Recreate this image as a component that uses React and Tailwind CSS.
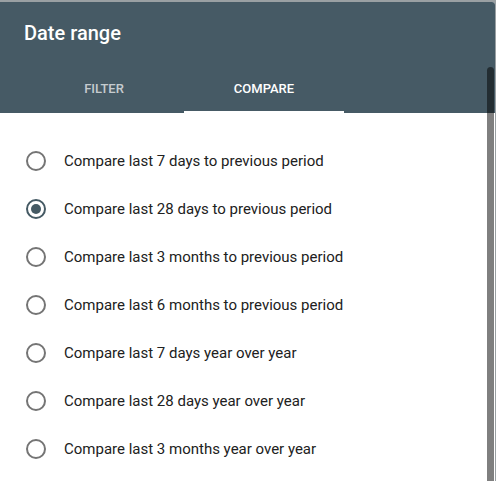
import React, { useState } from 'react';

const options = [
  'Compare last 7 days to previous period',
  'Compare last 28 days to previous period',
  'Compare last 3 months to previous period',
  'Compare last 6 months to previous period',
  'Compare last 7 days year over year',
  'Compare last 28 days year over year',
  'Compare last 3 months year over year',
];

function Radio({ checked }) {
  return (
    <span
      className={`flex h-5 w-5 shrink-0 items-center justify-center rounded-full border-2 ${
        checked ? 'border-[#455a64]' : 'border-[#757575]'
      }`}
    >
      {checked ? <span className="h-2.5 w-2.5 rounded-full bg-[#455a64]" /> : null}
    </span>
  );
}

export default function App() {
  const [selected, setSelected] = useState(1);
  const [tab, setTab] = useState('compare');

  return (
    <div className="relative h-[481px] w-[496px] overflow-hidden bg-[#9aa0a3] font-['Roboto',sans-serif]">
      <div className="mt-[2px] h-[479px] w-[495px] overflow-hidden rounded-tr-[3px] bg-white">
        <div className="bg-[#465a65] text-white">
          <div className="flex h-[63px] items-center px-6 pb-[1px] text-[20px] font-medium">Date range</div>
          <div className="flex h-12 px-6 text-[13px] font-medium">
            <button
              className={`relative w-40 uppercase ${tab === 'filter' ? 'text-white' : 'text-white/70'}`}
              onClick={() => setTab('filter')}
            >
              Filter
              {tab === 'filter' ? <span className="absolute bottom-0 left-0 h-[2px] w-full bg-white" /> : null}
            </button>
            <button
              className={`relative w-40 uppercase ${tab === 'compare' ? 'text-white' : 'text-white/70'}`}
              onClick={() => setTab('compare')}
            >
              Compare
              {tab === 'compare' ? <span className="absolute bottom-0 left-0 h-[2px] w-full bg-white" /> : null}
            </button>
          </div>
        </div>

        <ul className="pt-6">
          {options.map((label, i) => (
            <li key={label}>
              <label
                className="flex h-12 cursor-pointer items-center gap-[18px] pl-[26px] text-[15px] text-[#212121]"
                onClick={() => setSelected(i)}
              >
                <Radio checked={selected === i} />
                <span>{label}</span>
              </label>
            </li>
          ))}
        </ul>
      </div>

      <div className="absolute right-[2px] top-[67px] bottom-0 w-[7px] rounded-t-full bg-black/50" />
    </div>
  );
}
